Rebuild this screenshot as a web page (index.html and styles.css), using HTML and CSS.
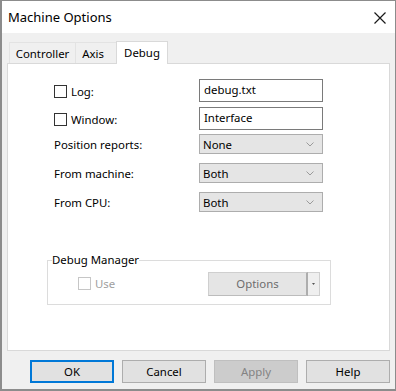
FILE: index.html
```html
<!DOCTYPE html>
<html>
<head>
<meta charset="utf-8">
<link rel="stylesheet" href="styles.css">
</head>
<body>
<div class="window">
  <div class="titlebar">
    <span class="title">Machine Options</span>
    <svg class="close" width="12" height="12" viewBox="0 0 12 12"><path d="M0.5 0.5 L11.5 11.5 M11.5 0.5 L0.5 11.5" stroke="#1a1a1a" stroke-width="1.2" fill="none"/></svg>
  </div>
  <div class="tabs">
    <div class="tab tab-controller">Controller</div>
    <div class="tab tab-axis">Axis</div>
    <div class="tab active">Debug</div>
  </div>
  <div class="panel">
    <div class="row row-field">
      <label class="label check-label"><span class="checkbox"></span>Log:</label>
      <div class="textbox">debug.txt</div>
    </div>
    <div class="row row-field">
      <label class="label check-label"><span class="checkbox"></span>Window:</label>
      <div class="textbox">Interface</div>
    </div>
    <div class="row row-combo first-combo">
      <span class="label">Position reports:</span>
      <div class="combo"><span>None</span><svg class="chev" width="8" height="5" viewBox="0 0 8 5"><path d="M0.5 0.5 L4 4 L7.5 0.5" stroke="#9a9a9a" fill="none"/></svg></div>
    </div>
    <div class="row row-combo">
      <span class="label">From machine:</span>
      <div class="combo"><span>Both</span><svg class="chev" width="8" height="5" viewBox="0 0 8 5"><path d="M0.5 0.5 L4 4 L7.5 0.5" stroke="#9a9a9a" fill="none"/></svg></div>
    </div>
    <div class="row row-combo">
      <span class="label">From CPU:</span>
      <div class="combo"><span>Both</span><svg class="chev" width="8" height="5" viewBox="0 0 8 5"><path d="M0.5 0.5 L4 4 L7.5 0.5" stroke="#9a9a9a" fill="none"/></svg></div>
    </div>
    <fieldset class="group">
      <legend>Debug Manager</legend>
      <div class="group-row">
        <label class="use"><span class="checkbox disabled"></span>Use</label>
        <div class="split">
          <div class="split-main">Options</div>
          <div class="split-arrow"><svg width="3" height="2" viewBox="0 0 3 2"><path d="M0 0 H3 L1.5 2 Z" fill="#555"/></svg></div>
        </div>
      </div>
    </fieldset>
  </div>
  <div class="footer">
    <div class="btn default">OK</div>
    <div class="btn">Cancel</div>
    <div class="btn disabled">Apply</div>
    <div class="btn">Help</div>
  </div>
</div>
</body>
</html>
```

FILE: styles.css
```css
* { box-sizing: border-box; }
html, body { margin: 0; padding: 0; }
body {
  font-family: "Noto Sans", "Liberation Sans", sans-serif;
  font-size: 11.4px;
  color: #000;
  background: #fff;
}
.window {
  width: 396px;
  height: 391px;
  border: 1px solid #8c8c8c;
  border-left-width: 2px;
  border-bottom-width: 2px;
  background: #f0f0f0;
  display: flex;
  flex-direction: column;
}
.titlebar {
  height: 32px;
  background: #fff;
  display: flex;
  align-items: center;
  justify-content: space-between;
  padding: 0 9px 0 6px;
  flex: none;
}
.title {
  font-size: 13px;
  color: #000;
}
.close { margin-top: 1px; }
.tabs {
  display: flex;
  align-items: flex-end;
  height: 30px;
  padding-left: 7px;
  flex: none;
  position: relative;
  z-index: 1;
}
.tab {
  height: 21px;
  display: flex;
  align-items: center;
  justify-content: center;
  border: 1px solid #e3e3e3;
  border-bottom: none;
  margin-right: -1px;
  background: #f0f0f0;
}
.tab-controller { width: 67px; }
.tab-axis { width: 42px; padding-right: 6px; }
.tab.active {
  width: 52px;
  height: 23px;
  margin-bottom: -1px;
  background: #fff;
  padding-bottom: 2px;
  margin-left: 0;
  border-color: #d9d9d9;
}
.panel {
  margin: 0 5px 0 5px;
  height: 288px;
  background: #fff;
  border: 1px solid #d9d9d9;
  padding: 15px 0 0 46px;
  flex: none;
}
.row {
  display: flex;
  align-items: center;
}
.row-field { height: 23px; margin-bottom: 5px; }
.row-combo { height: 20px; margin-bottom: 9px; }
.first-combo { margin-top: -1px; }
.label {
  width: 145px;
  flex: none;
}
.check-label {
  display: flex;
  align-items: center;
  margin-top: 2px;
}
.checkbox {
  width: 13px;
  height: 13px;
  border: 1px solid #333;
  background: #fff;
  margin-right: 4px;
  flex: none;
}
.checkbox.disabled { border-color: #c6c6c6; }
.textbox {
  width: 124px;
  height: 23px;
  border: 1px solid #7a7a7a;
  padding: 1px 0 0 4px;
  line-height: 17px;
}
.combo {
  width: 124px;
  height: 20px;
  border: 1px solid #adadad;
  background: #e5e5e5;
  display: flex;
  align-items: center;
  justify-content: space-between;
  padding: 0 8px 0 3px;
}
.group {
  margin: 41px 0 0 -7px;
  width: 284px;
  height: 52px;
  border: 1px solid #dcdcdc;
  padding: 0;
}
.group legend {
  padding: 0;
  margin-left: 4px;
  line-height: 14px;
}
.group-row {
  display: flex;
  align-items: center;
  height: 25px;
  margin-top: 4px;
}
.use {
  display: flex;
  align-items: center;
  color: #a0a0a0;
  margin-left: 30px;
  width: 130px;
}
.split {
  display: flex;
  height: 24px;
}
.split-main {
  width: 100px;
  height: 24px;
  background: #e5e5e5;
  border: 1px solid #cfcfcf;
  border-right: 2px solid #adadad;
  border-bottom: 1px solid #bcbcbc;
  display: flex;
  align-items: center;
  justify-content: center;
  color: #6d6d6d;
}
.split-arrow {
  width: 12px;
  height: 24px;
  background: #efefef;
  border: 1px solid #cfcfcf;
  border-left: none;
  display: flex;
  align-items: center;
  justify-content: center;
}
.footer {
  display: flex;
  gap: 8px;
  padding: 9px 0 0 28px;
}
.btn {
  width: 84px;
  height: 23px;
  background: #e1e1e1;
  border: 1px solid #adadad;
  display: flex;
  align-items: center;
  justify-content: center;
}
.btn.default {
  border: 2px solid #0078d7;
}
.btn.disabled {
  background: #cccccc;
  border-color: #bfbfbf;
  color: #838383;
}
```
